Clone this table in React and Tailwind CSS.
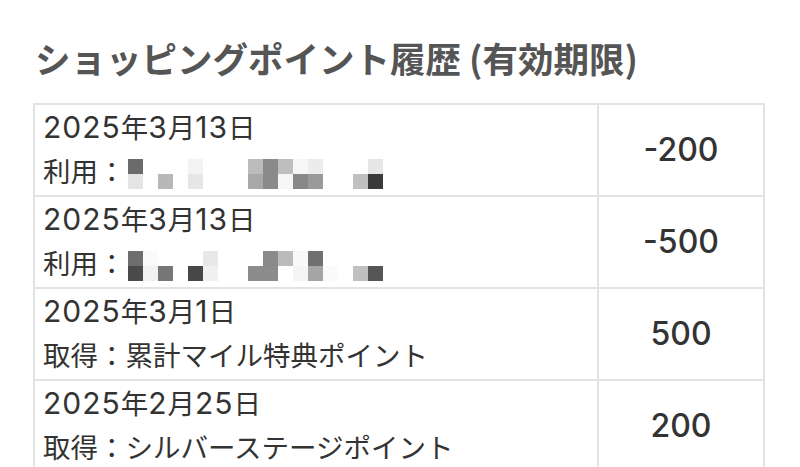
import React from "react";

const JP = { fontFamily: '"Noto Sans CJK JP", "Noto Sans", sans-serif' };
const NUM = { fontFamily: 'Inter, "Liberation Sans", sans-serif' };

const mosaics = [
  {
    top: ["#6b6b6b", "", "", "", "#f3f3f3", "", "", "", "#bcbcbc", "#8a8a8a", "#bebebe", "#f6f6f6", "#ececec", "", "", "", "#e6e6e6"],
    bottom: ["#e4e4e4", "", "#b8b8b8", "", "#e6e6e6", "", "", "", "#a8a8a8", "#8a8a8a", "#f6f6f6", "#888888", "#9a9a9a", "", "", "#c0c0c0", "#3a3a3a"],
  },
  {
    top: ["#6e6e6e", "#fafafa", "", "", "", "#e8e8e8", "", "", "", "#8a8a8a", "#bbbbbb", "#f8f8f8", "#707070", "", "", "", ""],
    bottom: ["#4a4a4a", "#f2f2f2", "#777777", "", "#474747", "#f0f0f0", "", "", "#8c8c8c", "#8c8c8c", "", "#f5f5f5", "#a5a5a5", "#fafafa", "", "#c0c0c0", "#555555"],
  },
];

function Mosaic({ data }) {
  return (
    <div className="ml-[2px] mt-[6px] flex flex-col">
      {[data.top, data.bottom].map((row, r) => (
        <div key={r} className="flex">
          {row.map((c, i) => (
            <div key={i} className="h-[15px] w-[15px]" style={{ backgroundColor: c || "#ffffff" }} />
          ))}
        </div>
      ))}
    </div>
  );
}

function DateText({ parts }) {
  return (
    <div className="flex h-[44px] items-center whitespace-nowrap">
      {parts.map((p, i) =>
        /^\d+$/.test(p) ? (
          <span key={i} className="text-[30px] tracking-[1px]" style={NUM}>
            {p}
          </span>
        ) : (
          <span key={i} className="text-[27.5px]" style={JP}>
            {p}
          </span>
        )
      )}
    </div>
  );
}

const rows = [
  { date: ["2025", "年", "3", "月", "13", "日"], label: "利用：", mosaic: 0, amount: "-200" },
  { date: ["2025", "年", "3", "月", "13", "日"], label: "利用：", mosaic: 1, amount: "-500" },
  { date: ["2025", "年", "3", "月", "1", "日"], label: "取得：累計マイル特典ポイント", amount: "500" },
  { date: ["2025", "年", "2", "月", "25", "日"], label: "取得：シルバーステージポイント", amount: "200" },
];

export default function App() {
  return (
    <div className="h-[467px] w-[800px] overflow-hidden bg-white pl-[33px] pt-[40px] text-[#333333]">
      <h1 className="ml-[2px] h-[36px] text-[35.5px] font-bold leading-[36px] text-[#555555] whitespace-nowrap" style={JP}>
        ショッピングポイント履歴 (有効期限)
      </h1>
      <div className="mt-[27px] w-[732px] border-x-2 border-t-2 border-[#e3e3e3]">
        {rows.map((r, i) => (
          <div key={i} className="flex border-b-2 border-[#e3e3e3]">
            <div className="w-[564px] border-r-2 border-[#e3e3e3] pt-0 pb-[2px] pl-[8px]">
              <DateText parts={r.date} />
              <div className="flex h-[44px] items-center whitespace-nowrap">
                <span className="text-[27.5px]" style={JP}>
                  {r.label}
                </span>
                {r.mosaic !== undefined && <Mosaic data={mosaics[r.mosaic]} />}
              </div>
            </div>
            <div className="flex flex-1 items-center justify-center">
              <span className="text-[32px] font-medium" style={NUM}>
                {r.amount}
              </span>
            </div>
          </div>
        ))}
      </div>
    </div>
  );
}
